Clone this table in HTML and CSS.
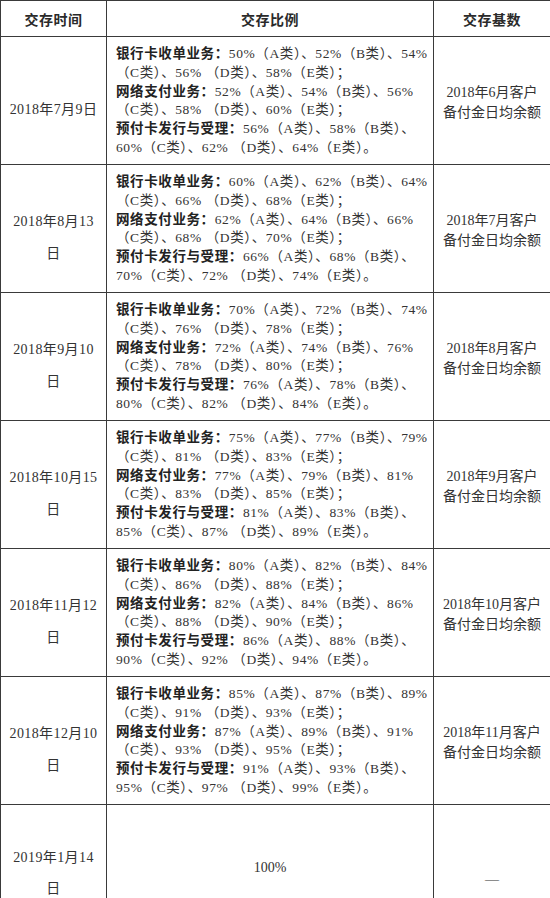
FILE: index.html
```html
<!DOCTYPE html>
<html lang="zh-CN">
<head>
<meta charset="utf-8">
<title>交存比例</title>
<link rel="stylesheet" href="styles.css">
</head>
<body>
<table class="deposit">
  <colgroup>
    <col class="c-date">
    <col class="c-ratio">
    <col class="c-base">
  </colgroup>
  <thead>
    <tr>
      <th>交存时间</th>
      <th>交存比例</th>
      <th>交存基数</th>
    </tr>
  </thead>
  <tbody>
    <tr>
      <td class="date">2018年7月9日</td>
      <td class="ratio"><b>银行卡收单业务：</b>50%（A类）、52%（B类）、54%<br>（C类）、56% （D类）、58%（E类）；<br><b>网络支付业务：</b>52%（A类）、54%（B类）、56%<br>（C类）、58% （D类）、60%（E类）；<br><b>预付卡发行与受理：</b>56%（A类）、58%（B类）、<br>60%（C类）、62% （D类）、64%（E类）。</td>
      <td class="base">2018年6月客户<br>备付金日均余额</td>
    </tr>
    <tr>
      <td class="date">2018年8月13<br>日</td>
      <td class="ratio"><b>银行卡收单业务：</b>60%（A类）、62%（B类）、64%<br>（C类）、66% （D类）、68%（E类）；<br><b>网络支付业务：</b>62%（A类）、64%（B类）、66%<br>（C类）、68% （D类）、70%（E类）；<br><b>预付卡发行与受理：</b>66%（A类）、68%（B类）、<br>70%（C类）、72% （D类）、74%（E类）。</td>
      <td class="base">2018年7月客户<br>备付金日均余额</td>
    </tr>
    <tr>
      <td class="date">2018年9月10<br>日</td>
      <td class="ratio"><b>银行卡收单业务：</b>70%（A类）、72%（B类）、74%<br>（C类）、76% （D类）、78%（E类）；<br><b>网络支付业务：</b>72%（A类）、74%（B类）、76%<br>（C类）、78% （D类）、80%（E类）；<br><b>预付卡发行与受理：</b>76%（A类）、78%（B类）、<br>80%（C类）、82% （D类）、84%（E类）。</td>
      <td class="base">2018年8月客户<br>备付金日均余额</td>
    </tr>
    <tr>
      <td class="date">2018年10月15<br>日</td>
      <td class="ratio"><b>银行卡收单业务：</b>75%（A类）、77%（B类）、79%<br>（C类）、81% （D类）、83%（E类）；<br><b>网络支付业务：</b>77%（A类）、79%（B类）、81%<br>（C类）、83% （D类）、85%（E类）；<br><b>预付卡发行与受理：</b>81%（A类）、83%（B类）、<br>85%（C类）、87% （D类）、89%（E类）。</td>
      <td class="base">2018年9月客户<br>备付金日均余额</td>
    </tr>
    <tr>
      <td class="date">2018年11月12<br>日</td>
      <td class="ratio"><b>银行卡收单业务：</b>80%（A类）、82%（B类）、84%<br>（C类）、86% （D类）、88%（E类）；<br><b>网络支付业务：</b>82%（A类）、84%（B类）、86%<br>（C类）、88% （D类）、90%（E类）；<br><b>预付卡发行与受理：</b>86%（A类）、88%（B类）、<br>90%（C类）、92% （D类）、94%（E类）。</td>
      <td class="base">2018年10月客户<br>备付金日均余额</td>
    </tr>
    <tr>
      <td class="date">2018年12月10<br>日</td>
      <td class="ratio"><b>银行卡收单业务：</b>85%（A类）、87%（B类）、89%<br>（C类）、91% （D类）、93%（E类）；<br><b>网络支付业务：</b>87%（A类）、89%（B类）、91%<br>（C类）、93% （D类）、95%（E类）；<br><b>预付卡发行与受理：</b>91%（A类）、93%（B类）、<br>95%（C类）、97% （D类）、99%（E类）。</td>
      <td class="base">2018年11月客户<br>备付金日均余额</td>
    </tr>
    <tr class="last">
      <td class="date"><div class="cell-box">2019年1月14<br>日</div></td>
      <td class="full"><div class="cell-box">100%</div></td>
      <td class="dash"><div class="cell-box">—</div></td>
    </tr>
  </tbody>
</table>
</body>
</html>
```
FILE: styles.css
```css
html, body {
  margin: 0;
  padding: 0;
  background: #ffffff;
  overflow: hidden;
}

.deposit {
  width: 550px;
  border-collapse: collapse;
  table-layout: fixed;
  font-family: "Liberation Serif", "Noto Sans CJK SC", serif;
  color: #333333;
  font-size: 14px;
}

.c-date { width: 106px; }
.c-ratio { width: 327px; }
.c-base { width: 117px; }

.deposit th,
.deposit td {
  border: 1px solid #3a3a3a;
  padding: 0;
}

.deposit th {
  height: 35px;
  font-size: 14px;
  font-weight: bold;
  letter-spacing: 0.5px;
  color: #2a2a2a;
  text-align: center;
  vertical-align: middle;
}

.date {
  text-align: center;
  vertical-align: middle;
  line-height: 32px;
  letter-spacing: 0.4px;
  padding-top: 18px !important;
}

.ratio {
  font-size: 13.5px;
  line-height: 18.75px;
  letter-spacing: 0.6px;
  white-space: nowrap;
  vertical-align: top;
  padding: 8px 0 6.5px 9px !important;
  color: #333333;
}

.ratio b {
  font-weight: bold;
  color: #222222;
}

.base {
  text-align: center;
  vertical-align: middle;
  line-height: 20px;
  padding-top: 5px !important;
}

.last td {
  vertical-align: top;
  padding: 0 !important;
}

.cell-box {
  height: 93px;
  overflow: visible;
  text-align: center;
}

.last .date .cell-box {
  box-sizing: border-box;
  padding-top: 37px;
  line-height: 31px;
}

.last .full .cell-box {
  box-sizing: border-box;
  padding-top: 53px;
  line-height: 20px;
}

.last .dash .cell-box {
  box-sizing: border-box;
  padding-top: 65px;
  line-height: 20px;
}
```
